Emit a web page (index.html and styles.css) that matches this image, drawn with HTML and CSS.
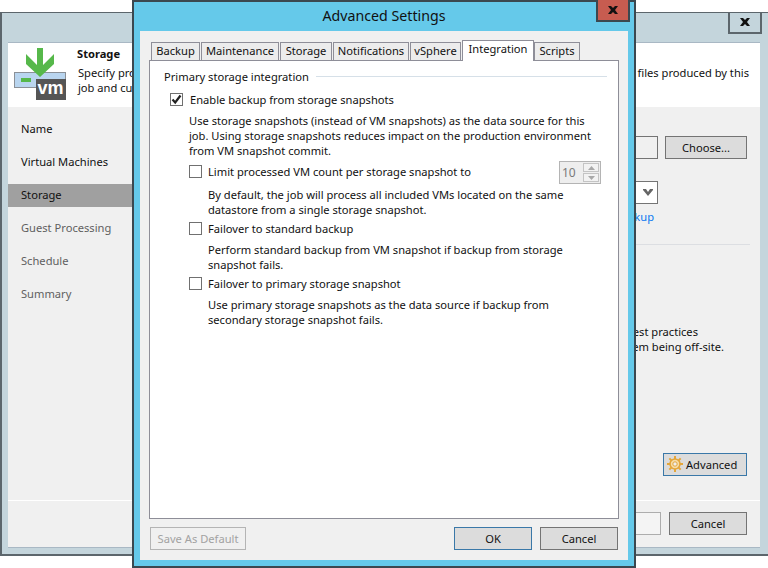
FILE: index.html
```html
<!DOCTYPE html>
<html lang="en">
<head>
<meta charset="utf-8">
<title>Advanced Settings</title>
<link rel="stylesheet" href="styles.css">
</head>
<body>
<div class="desktop">
  <section class="wizard">
    <div class="wizard-bar">
      <button class="wizard-close" aria-label="Close"><svg width="12" height="10" viewBox="0 0 12 10"><path d="M1 1h3l2 2 2-2h3L8 5l3 4H8L6 7 4 9H1l3-4z" fill="#111"/></svg></button>
    </div>
    <div class="wizard-panel">
      <header class="wizard-head">
        <svg class="head-icon" width="52" height="53" viewBox="0 0 52 53">
          <rect x="0.500" y="25.500" width="51" height="15" fill="#b9d5ef" stroke="#8b9097"/>
          <rect x="7" y="31" width="10" height="4" fill="#56b84a"/>
          <path d="M23 1h6v17L40 7v10L26 30 12 17V7l11 11z" fill="#56b84a"/>
          <rect x="22" y="32" width="30" height="21" fill="#555"/>
          <text x="36.500" y="47" class="vm-text" text-anchor="middle">vm</text>
        </svg>
        <div class="head-copy">
          <div class="head-title">Storage</div>
          <div class="head-line head-first"><span>Specify proxy</span><span>files produced by this</span></div>
          <div class="head-line">job and custom</div>
        </div>
      </header>
      <div class="wizard-body">
        <nav class="nav">
          <div class="nav-item">Name</div>
          <div class="nav-item">Virtual Machines</div>
          <div class="nav-item nav-current">Storage</div>
          <div class="nav-item nav-off">Guest Processing</div>
          <div class="nav-item nav-off">Schedule</div>
          <div class="nav-item nav-off">Summary</div>
        </nav>
        <main class="wizard-main">
          <div class="proxy-row">
            <div class="field"></div>
            <button class="btn btn-choose">Choose...</button>
          </div>
          <div class="select"><svg width="10" height="7" viewBox="0 0 10 7"><path d="M0 0h3l2 3 2-3h3v1L5 7 0 1z" fill="#666"/></svg></div>
          <div class="link-line"><a class="link">Map backup</a></div>
          <div class="separator"></div>
          <div class="note note-a">We recommend to follow the 3-2-1 rule and best practices</div>
          <div class="note note-b">for keeping backups with at least one of them being off-site.</div>
          <div class="advanced-row">
            <button class="btn btn-advanced">
              <svg width="16" height="16" viewBox="0 0 16 16"><g fill="#e4a63a"><rect x="7" y="0" width="2" height="16"/><rect x="0" y="7" width="16" height="2"/><rect x="7" y="0" width="2" height="16" transform="rotate(45 8 8)"/><rect x="7" y="0" width="2" height="16" transform="rotate(-45 8 8)"/></g><circle cx="8" cy="8" r="5" fill="#f6dca8" stroke="#e4a63a" stroke-width="1.600"/><circle cx="8" cy="8" r="2.200" fill="#eeeeee" stroke="#e4a63a"/></svg>
              <span>Advanced</span>
            </button>
          </div>
        </main>
      </div>
      <footer class="wizard-foot">
        <button class="btn btn-foot btn-muted"></button>
        <button class="btn btn-foot">Cancel</button>
      </footer>
    </div>
  </section>

  <section class="dialog">
    <div class="dialog-bar">
      <div class="dialog-title">Advanced Settings</div>
      <button class="dialog-close" aria-label="Close"><svg width="12" height="10" viewBox="0 0 12 10"><path d="M1 1h3l2 2 2-2h3L8 5l3 4H8L6 7 4 9H1l3-4z" fill="#111"/></svg></button>
    </div>
    <div class="dialog-body">
      <div class="tabs">
        <div class="tab">Backup</div>
        <div class="tab">Maintenance</div>
        <div class="tab">Storage</div>
        <div class="tab">Notifications</div>
        <div class="tab">vSphere</div>
        <div class="tab tab-active">Integration</div>
        <div class="tab">Scripts</div>
      </div>
      <div class="tab-panel">
        <div class="group-head"><span>Primary storage integration</span><i class="group-rule"></i></div>
        <div class="check-row row-enable"><span class="check"><svg width="11" height="11" viewBox="0 0 11 11"><path d="M1.500 5.500 4.200 8.500 9.500 1.500" fill="none" stroke="#222" stroke-width="2.200"/></svg></span><span class="check-label">Enable backup from storage snapshots</span></div>
        <p class="desc desc-enable">Use storage snapshots (instead of VM snapshots) as the data source for this<br>job. Using storage snapshots reduces impact on the production environment<br>from VM snapshot commit.</p>
        <div class="suboptions">
          <div class="check-row row-limit"><span class="check"></span><span class="check-label">Limit processed VM count per storage snapshot to</span>
            <div class="spinner"><span class="spin-value">10</span><span class="spin-btns"><i class="spin-btn"><svg width="7" height="4" viewBox="0 0 7 4"><path d="M0 4 3.500 0 7 4z" fill="#a8a8a8"/></svg></i><i class="spin-btn"><svg width="7" height="4" viewBox="0 0 7 4"><path d="M0 0 3.500 4 7 0z" fill="#a8a8a8"/></svg></i></span></div>
          </div>
          <p class="desc desc-limit">By default, the job will process all included VMs located on the same<br>datastore from a single storage snapshot.</p>
          <div class="check-row row-fail"><span class="check"></span><span class="check-label">Failover to standard backup</span></div>
          <p class="desc desc-fail">Perform standard backup from VM snapshot if backup from storage<br>snapshot fails.</p>
          <div class="check-row row-fail"><span class="check"></span><span class="check-label">Failover to primary storage snapshot</span></div>
          <p class="desc desc-fail">Use primary storage snapshots as the data source if backup from<br>secondary storage snapshot fails.</p>
        </div>
      </div>
      <div class="dialog-foot">
        <button class="btn btn-default" disabled>Save As Default</button>
        <div class="dialog-actions">
          <button class="btn btn-action btn-primary">OK</button>
          <button class="btn btn-action">Cancel</button>
        </div>
      </div>
    </div>
  </section>
</div>
</body>
</html>
```
FILE: styles.css
```css
* { box-sizing: border-box; }
html, body { margin: 0; padding: 0; }
body {
  width: 768px; height: 568px; overflow: hidden; background: #fff;
  font: 11.150px/15px "Noto Sans", "Open Sans", sans-serif; color: #111;
}
.desktop { position: relative; width: 768px; height: 568px; overflow: hidden; }
button { font: inherit; color: inherit; padding: 0 0 1px; margin: 0; }

/* back window */
.wizard {
  position: absolute; left: 0; top: 12px; width: 770px; height: 544px;
  display: flex; flex-direction: column;
  background: #c4d5dc; border: 2px solid #5c666c; border-top-width: 1px; border-bottom-width: 2px;
  padding: 0 8px 6px 6px;
}
.wizard-bar { height: 29px; flex: none; display: flex; justify-content: flex-end; margin-right: -2px; }
.wizard-close {
  width: 34px; height: 21px; background: #c4d5dc; border: 2px solid #5c666c; border-top: 0;
  display: flex; align-items: center; justify-content: center;
}
.wizard-panel {
  flex: 1; min-height: 0; display: flex; flex-direction: column;
  background: #f0f0f0; border-top: 1px solid #a9b8c4; border-bottom: 1px solid #a9b8c4;
}
.wizard-head { height: 64px; flex: none; background: #fff; display: flex; padding: 4px 0 0 6px; }
.head-icon { flex: none; }
.vm-text { font: bold 18px "Liberation Sans", sans-serif; fill: #fff; }
.head-copy { margin: -1px 11px 0 12px; flex: 1; min-width: 0; }
.head-title { font-weight: 700; height: 16px; margin-left: -1px; }
.head-line { white-space: nowrap; }
.head-first { margin-top: 3px; display: flex; justify-content: space-between; }
.wizard-body { flex: 1; min-height: 0; display: flex; }
.nav { width: 124px; flex: none; padding-top: 11px; display: flex; flex-direction: column; gap: 10px; }
.nav-item { height: 23px; line-height: 21px; padding-left: 13px; white-space: nowrap; }
.nav-current { background: #a0a0a0; }
.nav-off { color: #5f5f5f; }
.wizard-main { flex: 1; min-width: 0; display: flex; flex-direction: column; padding: 29px 13px 24px 10px; }
.proxy-row { display: flex; gap: 7px; }
.field { flex: 1; height: 23px; background: #f0f0f0; border: 1px solid #747474; }
.btn { height: 23px; background: #dcdcdc; border: 1px solid #747474; text-align: center; white-space: nowrap; }
.btn-choose { width: 82px; }
.select {
  height: 23px; margin: 22px 89px 0 0; background: #fff; border: 1px solid #747474;
  display: flex; align-items: center; justify-content: flex-end; padding-right: 4px;
}
.link-line { margin: 5px 93px 0 0; text-align: right; }
.link { color: #0a78f0; }
.separator { height: 1px; background: #dcdee2; margin: 20px -3px 0 0; }
.note { text-align: right; white-space: nowrap; }
.note-a { margin: 79px 49px 0 0; }
.note-b { margin-right: 23px; }
.advanced-row { margin-top: auto; display: flex; justify-content: flex-end; }
.btn-advanced {
  width: 84px; display: flex; align-items: center; gap: 3px; padding-left: 3px;
  border-color: #3a78a8;
}
.wizard-foot {
  height: 47px; flex: none; border-top: 1px solid #fff; display: flex; justify-content: flex-end;
  gap: 8px; padding: 11px 13px 0 0;
}
.btn-foot { width: 78px; }
.btn-muted { background: #f4f4f4; border-color: #adadad; }

/* front dialog */
.dialog {
  position: absolute; left: 132px; top: 0; width: 504px; height: 568px;
  display: flex; flex-direction: column;
  background: #65c9ea; border: 2px solid #3b4850; padding: 0 6px 6px;
}
.dialog-bar { height: 29px; flex: none; position: relative; display: flex; justify-content: center; }
.dialog-title { font-size: 14.200px; line-height: 27px; color: #111; }
.dialog-close {
  position: absolute; right: -2px; top: -2px; width: 34px; height: 22px;
  background: #c75c50; border: 2px solid #3b4850; border-top: 0;
  display: flex; align-items: center; justify-content: center;
}
.dialog-body {
  flex: 1; min-height: 0; display: flex; flex-direction: column; background: #f0f0f0;
  padding: 9px 9px 10px;
}
.tabs {
  display: grid; flex: none; height: 20px; margin-left: 2px; align-items: end;
  grid-template-columns: 50px 79px 53px 77px 52px 72px 47px; justify-content: start;
  position: relative; z-index: 1;
}
.tab {
  height: 18px; line-height: 16px; text-align: center; background: #ececec;
  border: 1px solid #8e8e98; border-bottom: 0; margin-right: 1px; white-space: nowrap;
}
.tab-active { height: 21px; line-height: 16px; background: #fff; margin: 0 0 -1px; }
.tab-panel {
  flex: 1; min-height: 0; background: #fff; border: 1px solid #8e8e98;
  padding: 8px 11px 0 14px;
}
.group-head { display: flex; align-items: center; gap: 7px; height: 15px; white-space: nowrap; }
.group-rule { flex: 1; height: 1px; background: #d6e0e8; }
.check-row { display: flex; align-items: center; gap: 6px; height: 15px; padding-left: 6px; white-space: nowrap; }
.row-enable { margin-top: 8px; gap: 7px; }
.row-limit { margin-top: 6px; }
.row-fail { margin-top: 4px; }
.check {
  width: 13px; height: 13px; flex: none; background: #fff; border: 1px solid #707070;
  display: flex; align-items: center; justify-content: center;
}
.check-label { flex: 1; }
.spinner {
  width: 42px; height: 23px; margin: -3px 6px -5px 0; flex: none;
  background: #eeeeee; border: 1px solid #b4b4b4;
  display: flex; justify-content: space-between; padding: 1px;
}
.spin-value { color: #7a7a7a; line-height: 19px; padding-left: 1px; font-size: 12px; }
.spin-btns { width: 16px; display: flex; flex-direction: column; gap: 1px; }
.spin-btn { flex: 1; background: #f2f2f2; border: 1px solid #c4c4c4; display: flex; align-items: center; justify-content: center; }
.desc { margin: 0; padding-left: 25px; white-space: nowrap; }
.desc-enable { margin-top: 6px; }
.desc-limit { margin-top: 8px; }
.desc-fail { margin-top: 6px; }
.suboptions { padding-left: 19px; }
.dialog-foot { flex: none; display: flex; justify-content: space-between; margin-top: 8px; padding: 0 1px; }
.btn-default { width: 96px; background: #f0f0f0; border-color: #b4b4b4; color: #a2a2a2; }
.dialog-actions { display: flex; gap: 8px; }
.btn-action { width: 78px; }
.btn-primary { border-color: #3a78a8; }
```
